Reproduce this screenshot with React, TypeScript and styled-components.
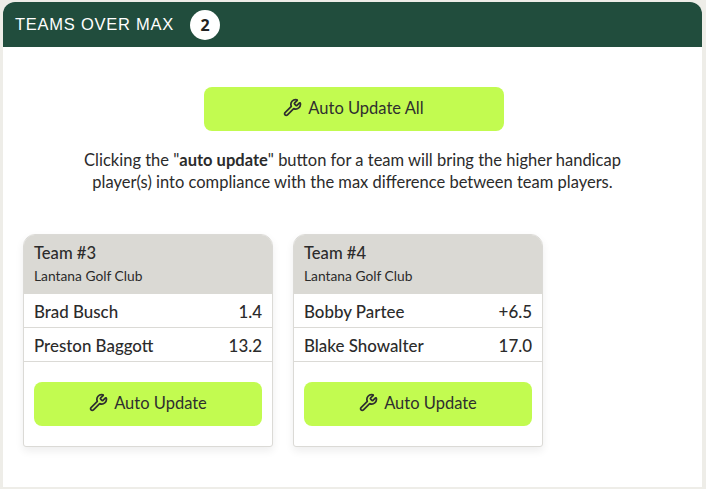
import React from "react";
import styled, { createGlobalStyle } from "styled-components";
import { Wrench } from "lucide-react";

const Global = createGlobalStyle`
  html, body { margin: 0; padding: 0; background: #eeede8; }
  body { font-family: "Lato", "Liberation Sans", sans-serif; color: #2b2b2b; }
`;
const Page = styled.div`
  width: 706px; height: 489px; box-sizing: border-box; padding: 2px 4px 2px 3px; overflow: hidden;
`;
const Panel = styled.div`
  height: 100%; background: #fff; border-radius: 12px 12px 0 0; overflow: hidden;
`;
const Header = styled.div`
  height: 45px; background: #214d3d; display: flex; align-items: center; padding-left: 12px; gap: 16px;
`;
const Title = styled.div`
  font-family: "Liberation Sans", sans-serif; font-size: 16.5px; letter-spacing: 0.75px; color: #fff; margin-bottom: 1px;
`;
const Badge = styled.div`
  width: 30px; height: 30px; border-radius: 50%; background: #fff; color: #222; font-family: "Noto Sans", sans-serif;
  font-weight: 700; font-size: 16px; display: flex; align-items: center; justify-content: center;
`;
const Body = styled.div`
  display: flex; flex-direction: column; padding: 40px 20px 0;
`;
const Button = styled.button<{ $wide?: boolean }>`
  width: ${(p) => (p.$wide ? "300px" : "100%")};
  align-self: ${(p) => (p.$wide ? "center" : "auto")};
  height: 44px; border: 0; border-radius: 8px; background: #c2fb50; color: #2f2f2f;
  display: flex; align-items: center; justify-content: center; gap: 6px; padding: 0 0 3px;
  font-family: "Lato", sans-serif; font-size: 16.5px;
  ${(p) => (p.$wide ? "margin-left: 2px;" : "")}
`;
const Intro = styled.p`
  margin: 18px auto 0; width: 560px; text-align: center; font-size: 16.5px; line-height: 22px; color: #2b2b2b;
`;
const Cards = styled.div`
  display: flex; gap: 20px; margin-top: 41px;
`;
const Card = styled.div`
  width: 250px; height: 213px; box-sizing: border-box; border: 1px solid #dbdad6; border-radius: 12px 12px 3px 3px;
  box-shadow: 0 4px 8px rgba(0,0,0,.07); background: #fff; overflow: hidden;
`;
const CardHead = styled.div`
  height: 59px; box-sizing: border-box; background: #dad9d4; padding: 8px 10px 0;
`;
const TeamName = styled.div`
  font-size: 16.6px; line-height: 20px; font-weight: 500;
`;
const Club = styled.div`
  font-size: 13.8px; line-height: 18px; margin-top: 4px;
`;
const Row = styled.div`
  height: 34px; box-sizing: border-box; border-bottom: 1px solid #dbdad6; padding: 1px 10px 0;
  display: flex; align-items: center; justify-content: space-between; font-size: 16.9px; font-weight: 500;
`;
const CardFoot = styled.div`
  padding: 20px 10px 0;
`;

const teams = [
  { name: "Team #3", players: [["Brad Busch", "1.4"], ["Preston Baggott", "13.2"]] },
  { name: "Team #4", players: [["Bobby Partee", "+6.5"], ["Blake Showalter", "17.0"]] },
];

export default function App() {
  return (
    <Page>
      <Global />
      <Panel>
        <Header>
          <Title>TEAMS OVER MAX</Title>
          <Badge>2</Badge>
        </Header>
        <Body>
          <Button $wide><Wrench size={19} strokeWidth={2.2} />Auto Update All</Button>
          <Intro>
            Clicking the "<b>auto update</b>" button for a team will bring the higher handicap player(s) into compliance with the max difference between team players.
          </Intro>
          <Cards>
            {teams.map((t) => (
              <Card key={t.name}>
                <CardHead>
                  <TeamName>{t.name}</TeamName>
                  <Club>Lantana Golf Club</Club>
                </CardHead>
                {t.players.map(([n, h]) => (
                  <Row key={n}><span>{n}</span><span>{h}</span></Row>
                ))}
                <CardFoot>
                  <Button><Wrench size={19} strokeWidth={2.2} />Auto Update</Button>
                </CardFoot>
              </Card>
            ))}
          </Cards>
        </Body>
      </Panel>
    </Page>
  );
}
